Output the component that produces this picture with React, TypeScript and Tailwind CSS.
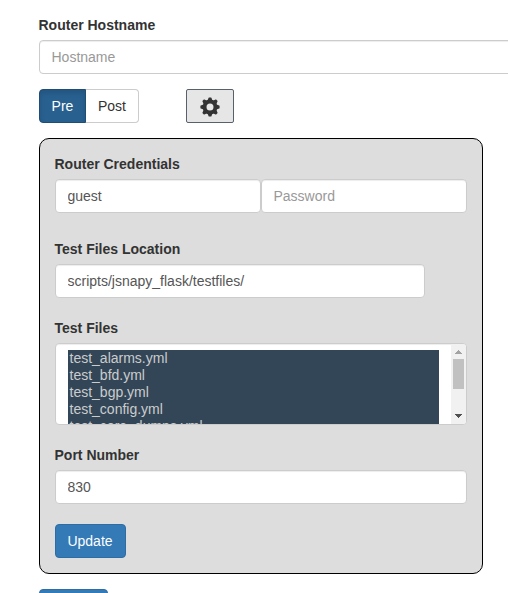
import React from "react";

const files = [
  "test_alarms.yml",
  "test_bfd.yml",
  "test_bgp.yml",
  "test_config.yml",
  "test_core_dumps.yml",
];

const field =
  "block h-[34px] rounded border border-[#ccc] bg-white px-3 py-1.5 text-sm text-[#555] placeholder:text-[#999] shadow-[inset_0_1px_1px_rgba(0,0,0,0.075)] outline-none";

function Label({ children }: { children: React.ReactNode }) {
  return <label className="mb-[5px] block text-sm leading-5 font-bold">{children}</label>;
}

const teeth = [0, 45, 90, 135, 180, 225, 270, 315];

function Cog() {
  return (
    <svg className="relative top-px" width="20" height="20" viewBox="-10 -10 20 20">
      <circle r="5.45" fill="none" stroke="#333" strokeWidth="3.9" />
      {teeth.map((angle) => (
        <path
          key={angle}
          d="M-2.4 -6.6 L-1.4 -9.2 Q-1.2 -9.6 -0.9 -9.6 L0.9 -9.6 Q1.2 -9.6 1.4 -9.2 L2.4 -6.6 Z"
          fill="#333"
          transform={`rotate(${angle})`}
        />
      ))}
    </svg>
  );
}

function Scrollbar() {
  return (
    <div className="flex w-[15px] shrink-0 flex-col items-center bg-[#f1f1f1]">
      <svg width="15" height="15" shapeRendering="crispEdges">
        <path d="M7 6h1v1h1v1h1v1h1v1H4V9h1V8h1V7h1z" fill="#a3a3a3" />
      </svg>
      <div className="h-[30px] w-[11px] bg-[#c1c1c1]" />
      <svg className="mt-auto" width="15" height="15" shapeRendering="crispEdges">
        <path d="M4 5h7v1h-1v1H9v1H8v1H7V8H6V7H5V6H4z" fill="#505050" />
      </svg>
    </div>
  );
}

export default function App() {
  return (
    <div className="h-[593px] w-[508px] overflow-hidden bg-white pt-[15px] pl-[38.5px] font-['Liberation_Sans',Arial,sans-serif] text-sm leading-5 text-[#333]">
      <Label>Router Hostname</Label>
      <input className={`${field} w-[600px]`} placeholder="Hostname" />

      <div className="mt-[15px] flex h-[34px]">
        <button className="w-[47px] rounded-l border border-[#204d74] bg-[#286090] pl-px text-white shadow-[inset_0_3px_5px_rgba(0,0,0,0.125)]">
          Pre
        </button>
        <button className="w-[53px] rounded-r border border-l-0 border-[#ccc] bg-white pl-px">Post</button>
        <button className="ml-[47px] flex w-12 items-center justify-center rounded-[2px] border border-[#57606b] bg-[#e6e6e6]">
          <Cog />
        </button>
      </div>

      <section className="mt-[15px] h-[436px] w-[444px] rounded-[10px] border border-black bg-[#ddd] p-[15px]">
        <Label>Router Credentials</Label>
        <div className="flex">
          <input className={`${field} w-[206px]`} defaultValue="guest" />
          <input className={`${field} w-[206px]`} placeholder="Password" />
        </div>

        <div className="mt-[26px]">
          <Label>Test Files Location</Label>
          <input className={`${field} w-[370px]`} defaultValue="scripts/jsnapy_flask/testfiles/" />
        </div>

        <div className="mt-5">
          <Label>Test Files</Label>
          <div className="flex h-[82px] overflow-hidden rounded border border-[#ccc] bg-white shadow-[inset_0_1px_1px_rgba(0,0,0,0.075)]">
            <ul className="mt-1.5 mr-3 ml-3 grow bg-[#334658] text-[#ccc]">
              {files.map((file) => (
                <li key={file} className="h-[17px] pl-0.5 leading-[17px]">
                  {file}
                </li>
              ))}
            </ul>
            <Scrollbar />
          </div>
        </div>

        <div className="mt-5">
          <Label>Port Number</Label>
          <input className={`${field} w-full`} defaultValue="830" />
        </div>

        <button className="mt-5 block h-[34px] w-[71px] rounded border border-[#2e6da4] bg-[#337ab7] text-white">
          Update
        </button>
      </section>

      <button className="mt-[15px] block h-[34px] w-[69px] rounded border border-[#2e6da4] bg-[#337ab7]" aria-label="Submit" />
    </div>
  );
}
